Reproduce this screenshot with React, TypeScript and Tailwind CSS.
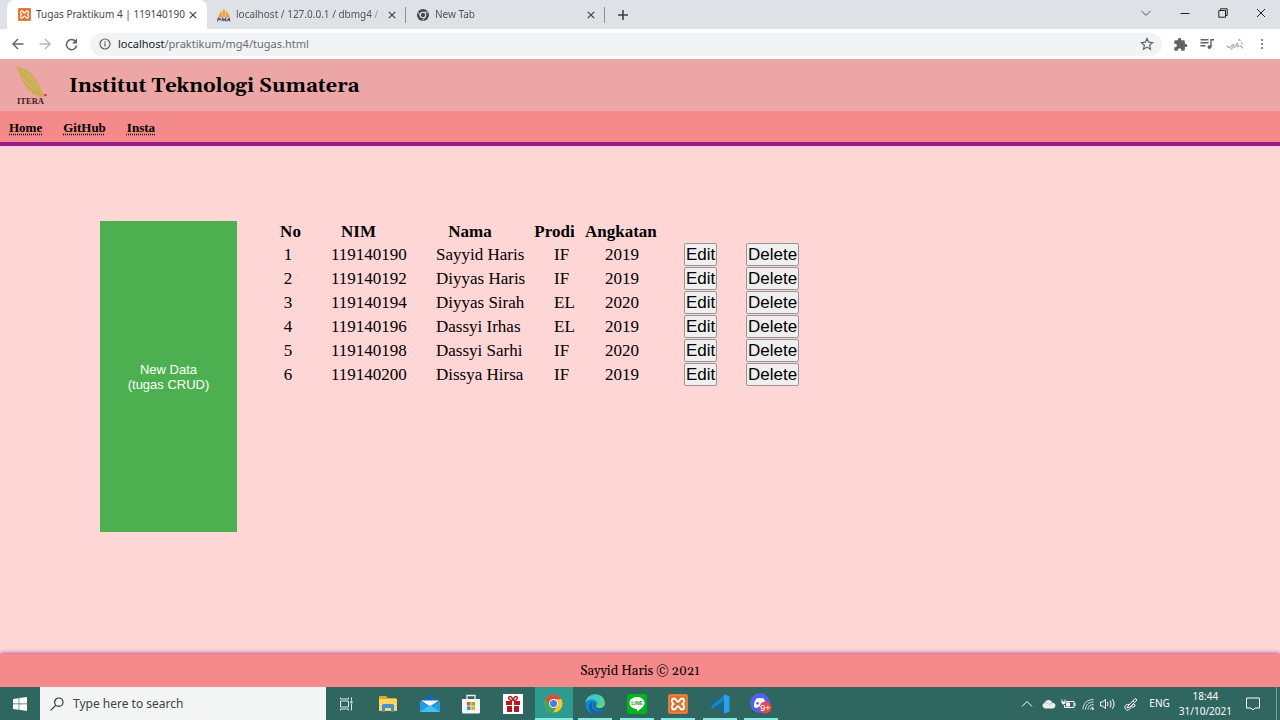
import type { ReactNode } from "react";

const rows = [
  { no: 1, nim: "119140190", nama: "Sayyid Haris", prodi: "IF", angkatan: 2019 },
  { no: 2, nim: "119140192", nama: "Diyyas Haris", prodi: "IF", angkatan: 2019 },
  { no: 3, nim: "119140194", nama: "Diyyas Sirah", prodi: "EL", angkatan: 2020 },
  { no: 4, nim: "119140196", nama: "Dassyi Irhas", prodi: "EL", angkatan: 2019 },
  { no: 5, nim: "119140198", nama: "Dassyi Sarhi", prodi: "IF", angkatan: 2020 },
  { no: 6, nim: "119140200", nama: "Dissya Hirsa", prodi: "IF", angkatan: 2019 },
];

function XamppIcon({ className }: { className: string }) {
  return (
    <svg viewBox="0 0 20 20" className={className} aria-hidden="true">
      <rect width="20" height="20" rx="2" fill="#e0702a" />
      <rect x="1.200" y="1.200" width="17.600" height="17.600" rx="1.500" fill="none" stroke="#f0a06a" strokeWidth=".6" />
      <path
        d="M6 4.500C4.300 4.500 3.900 5.800 3.900 7C3.900 8.600 4.500 9.500 5.800 10C4.500 10.500 3.900 11.400 3.900 13C3.900 14.200 4.300 15.500 6 15.500C8.300 15.500 8.300 12.300 10 12.300C11.700 12.300 11.700 15.500 14 15.500C15.700 15.500 16.100 14.200 16.100 13C16.100 11.400 15.500 10.500 14.200 10C15.500 9.500 16.100 8.600 16.100 7C16.100 5.800 15.700 4.500 14 4.500C11.700 4.500 11.700 7.700 10 7.700C8.300 7.700 8.300 4.500 6 4.500z"
        fill="none"
        stroke="#fff"
        strokeWidth="1.900"
        strokeLinejoin="round"
      />
    </svg>
  );
}

function PmaIcon() {
  return (
    <svg viewBox="0 0 16 14" className="h-3.5 w-4" aria-hidden="true">
      <path d="M2 9.500C3 7 4 4.500 5.800 3L6 9zM6.500 9.200C6.400 5.500 6.500 2.500 8 .5c1 2.600 1.400 5.600 1.200 8.500zM9.800 9c.3-2.300.2-4.500-.4-6.600 2.500 1.600 3.900 4 4.300 7z" fill="#f2a02c" />
      <path d="M1.500 13.300l.7-3.100h1.600q1.200.6.2 1.600H2.300M5.800 13.300l.8-3.100 1.200 2.100 2-2.100-.5 3.100M10.500 13.300l2.600-3.100.8 3.100M11.600 12.300h2" fill="none" stroke="#4b4e72" strokeWidth="1.100" />
    </svg>
  );
}

function ChromeMonoIcon() {
  return (
    <svg viewBox="0 0 14 14" className="size-3" aria-hidden="true">
      <circle cx="7" cy="7" r="7" fill="#46494d" />
      <circle cx="7" cy="7" r="3.200" fill="#46494d" stroke="#dee1e6" strokeWidth="1.300" />
      <path d="M7 3.800h6M4.200 8.600L1.300 3.600M9.800 8.600l-3 5" stroke="#dee1e6" strokeWidth="1" />
    </svg>
  );
}

function CloseIcon({ className }: { className: string }) {
  return (
    <svg viewBox="0 0 10 10" className={className} fill="none" stroke="currentColor" aria-hidden="true">
      <path d="M1 1l8 8M9 1L1 9" />
    </svg>
  );
}

function Tab({ icon, title, active }: { icon: ReactNode; title: string; active?: boolean }) {
  return (
    <div
      className={
        active
          ? "flex h-[29px] w-[200px] items-center rounded-t-lg bg-white pr-[10px] pl-[9px]"
          : "flex h-[29px] w-[199px] items-center pl-[9px]"
      }
    >
      <span className="flex w-4 shrink-0 justify-center">{icon}</span>
      <span
        className={
          active
            ? "ml-1 min-w-0 flex-1 text-[10px] whitespace-nowrap text-[#45484c]"
            : "ml-1 min-w-0 flex-1 mask-r-from-90% text-[10px] whitespace-nowrap text-[#505458]"
        }
      >
        {title}
      </span>
      <button aria-label={`Close ${title}`} className="ml-1 shrink-0 text-[#3c4043]">
        <CloseIcon className="size-2 stroke-[1.500]" />
      </button>
      {!active && <span className="ml-[9px] h-4 w-px shrink-0 bg-[#8d9095]" />}
    </div>
  );
}

function BrowserChrome() {
  return (
    <div className="font-['Noto_Sans',sans-serif]">
      <div className="flex h-[29px] items-center bg-[#dee1e6] pl-[7px]">
        <Tab active icon={<XamppIcon className="size-[13px]" />} title="Tugas Praktikum 4 | 119140190" />
        <Tab icon={<PmaIcon />} title="localhost / 127.0.0.1 / dbmg4 / m" />
        <Tab icon={<ChromeMonoIcon />} title="New Tab" />
        <button aria-label="New tab" className="ml-3 text-[#3c4043]">
          <svg viewBox="0 0 12 12" className="size-3" fill="none" stroke="currentColor" strokeWidth="1.600" aria-hidden="true">
            <path d="M6 1v10M1 6h10" />
          </svg>
        </button>
        <div className="ml-auto flex items-center pr-[14px] pb-[4px] text-[#222]">
          <button aria-label="Search tabs" className="mr-7">
            <svg viewBox="0 0 12 12" className="size-3" fill="none" stroke="#555" aria-hidden="true">
              <path d="M1.500 4L6 8.300 10.500 4" />
            </svg>
          </button>
          <button aria-label="Minimize" className="mr-7">
            <svg viewBox="0 0 10 10" className="size-2.5" stroke="currentColor" aria-hidden="true">
              <path d="M.5 5.500h9" />
            </svg>
          </button>
          <button aria-label="Restore" className="mr-7">
            <svg viewBox="0 0 10 10" className="size-2.5" fill="none" stroke="currentColor" aria-hidden="true">
              <path d="M.8 2.500h6.700v6.700H.8zM2.500 2.500V.8h6.700v6.700H7.500" />
            </svg>
          </button>
          <button aria-label="Close window">
            <CloseIcon className="size-2.5 stroke-1" />
          </button>
        </div>
      </div>
      <div className="flex h-[30px] items-center bg-white pr-3 pl-3">
        <button aria-label="Back">
          <svg viewBox="0 0 12 12" className="size-3" fill="none" stroke="#5f6368" strokeWidth="1.400" aria-hidden="true">
            <path d="M11.500 6H1.200M6 1L1 6l5 5" />
          </svg>
        </button>
        <button aria-label="Forward" className="ml-[15px]">
          <svg viewBox="0 0 12 12" className="size-3" fill="none" stroke="#b4b7ba" strokeWidth="1.400" aria-hidden="true">
            <path d="M.5 6h10.300M6 1l5 5-5 5" />
          </svg>
        </button>
        <button aria-label="Reload" className="ml-[14px]">
          <svg viewBox="0 0 13 13" className="size-[13px]" aria-hidden="true">
            <path d="M10.500 3.300A5.100 5.100 0 1 0 11.600 7.500" fill="none" stroke="#5f6368" strokeWidth="1.500" />
            <path d="M12 .5v5H7z" fill="#5f6368" />
          </svg>
        </button>
        <div className="ml-3 flex h-[23px] flex-1 items-center rounded-full bg-[#f1f3f4] pr-2 pl-[9px]">
          <svg viewBox="0 0 12 12" className="size-3 shrink-0" fill="none" stroke="#5f6368" aria-hidden="true">
            <circle cx="6" cy="6" r="5" strokeWidth="1.200" />
            <path d="M6 5.300v3.200M6 3.300v1.200" strokeWidth="1.300" />
          </svg>
          <span className="ml-[7px] flex-1 text-[11px] text-[#686c70]">
            <span className="text-[#202124]">localhost</span>/praktikum/mg4/tugas.html
          </span>
          <button aria-label="Bookmark">
            <svg viewBox="0 0 14 14" className="size-3.5" fill="none" stroke="#5f6368" strokeWidth="1.200" aria-hidden="true">
              <path d="M7 1.500l1.600 3.700 4 .4-3 2.700.9 3.900L7 10.100l-3.500 2.100.9-3.900-3-2.700 4-.4z" />
            </svg>
          </button>
        </div>
        <div className="ml-[11px] flex items-center gap-3">
          <button aria-label="Extensions">
            <svg viewBox="0 0 24 24" className="size-[15px]" fill="#5f6368" aria-hidden="true">
              <path d="M20.500 11H19V7a2 2 0 0 0-2-2h-4V3.500a2.500 2.500 0 0 0-5 0V5H4a2 2 0 0 0-2 2v3.800h1.500a2.700 2.700 0 0 1 0 5.400H2V20a2 2 0 0 0 2 2h3.800v-1.500a2.700 2.700 0 0 1 5.400 0V22H17a2 2 0 0 0 2-2v-4h1.500a2.500 2.500 0 0 0 0-5z" />
            </svg>
          </button>
          <button aria-label="Media controls">
            <svg viewBox="0 0 14 12" className="h-3 w-3.5" fill="none" stroke="#5f6368" strokeWidth="1.400" aria-hidden="true">
              <path d="M.5 1.700h8M.5 4.700h8M.5 7.700h5M11 9V1.700h3" />
              <circle cx="9.500" cy="9" r="1.500" fill="#5f6368" strokeWidth="1" />
            </svg>
          </button>
          <button aria-label="Profile">
            <svg viewBox="0 0 18 14" className="h-3.5 w-[18px]" fill="none" stroke="#a9abad" aria-hidden="true">
              <path d="M1 8.500q1 3 3.500 1.500T6 7M4 12q2 .8 3-2l1-3M8.500 11q1-4 3-5 1 1 .5 4.500M9.500 9h4M12 3.500l1.500-1 1 1.500M15 5.500l1.500 1.500M14 8.500q2 1.500 3 3" strokeWidth="1.100" />
            </svg>
          </button>
          <button aria-label="Menu" className="flex w-3 flex-col items-center gap-0.5">
            <span className="size-0.5 rounded-full bg-[#5f6368]" />
            <span className="size-0.5 rounded-full bg-[#5f6368]" />
            <span className="size-0.5 rounded-full bg-[#5f6368]" />
          </button>
        </div>
      </div>
    </div>
  );
}

function IteraLogo() {
  return (
    <svg viewBox="0 0 34 40" className="h-10 w-[34px]" role="img" aria-label="ITERA">
      <path d="M1.500 .5l4 2 1.500-.5 2 2 2.500.2 2 2 3 .8 1 2.500 2.500 1.500.5 2.500 2.500 1.500 1 3 2 1.500.5 3 1.500 2 .5 3 2 2.500-.5 2-2.500-.5-2.500.5-3-2-3-.5-2-3-2.500-1-1-2.500-2-1.500-1-3-2-2-.5-3-2-2-.5-3.500z" fill="#c8ad55" />
      <path d="M4 3l25 26M9 6l19 19M6 9l16 17M14 8l12 14M9 14l11 11" stroke="#dfc478" strokeWidth=".8" strokeDasharray="1 1" />
      <circle cx="31.500" cy="30" r="1.200" fill="#d22c35" />
      <text x="16.500" y="39" textAnchor="middle" fontSize="8.500" fontWeight="700" fill="#3b2222" fontFamily="'Liberation Serif', serif">
        ITERA
      </text>
    </svg>
  );
}

const headerCell = "p-0 pl-[10px] text-center font-bold";
const cell = "p-0 pl-[30px]";
const rowButton =
  "block h-[23px] rounded-[2px] border border-[#9a9494] bg-[#efefef] px-px font-['Liberation_Sans',Arial,sans-serif] text-[17px] leading-[21px]";

function WebPage() {
  return (
    <div className="flex flex-1 flex-col bg-[#fed6d6] font-['Liberation_Serif','Times_New_Roman',serif] text-black">
      <header className="flex h-[52px] items-center bg-[#eca6a6] pl-[14px]">
        <IteraLogo />
        <h1 className="ml-[21px] pt-0.5 font-['Georgia','Gelasio','DejaVu_Serif',serif] text-xl font-bold">
          Institut Teknologi Sumatera
        </h1>
      </header>
      <nav className="flex h-[35px] items-center gap-[21px] border-b-4 border-[#9b1889] bg-[#f58a8a] pt-0.5 pl-[9px] text-[13px] font-bold">
        <a href="#home" className="underline decoration-dotted underline-offset-2">Home</a>
        <a href="#github" className="underline decoration-dotted underline-offset-2">GitHub</a>
        <a href="#insta" className="underline decoration-dotted underline-offset-2">Insta</a>
      </nav>
      <main className="flex flex-1 items-start px-[100px] pt-[75px]">
        <button className="h-[311px] w-[137px] shrink-0 bg-[#4caf50] font-['Liberation_Sans',Arial,sans-serif] text-[13px] leading-[15px] text-white">
          New Data
          <br />
          (tugas CRUD)
        </button>
        <table className="ml-[33px] w-[530px] table-fixed border-collapse text-left text-[17px] leading-[21px]">
          <colgroup>
            <col className="w-[31px]" />
            <col className="w-[105px]" />
            <col className="w-[118px]" />
            <col className="w-[51px]" />
            <col className="w-[79px]" />
            <col className="w-[62px]" />
            <col className="w-[84px]" />
          </colgroup>
          <thead>
            <tr>
              <th className={headerCell}>No</th>
              <th className={headerCell}>NIM</th>
              <th className={headerCell}>Nama</th>
              <th className={headerCell}>Prodi</th>
              <th className={headerCell}>Angkatan</th>
            </tr>
          </thead>
          <tbody>
            {rows.map((r) => (
              <tr key={r.nim} className="h-6">
                <td className="p-0 pl-[5px] text-center">{r.no}</td>
                <td className={cell}>{r.nim}</td>
                <td className={`${cell} whitespace-nowrap`}>{r.nama}</td>
                <td className={cell}>{r.prodi}</td>
                <td className={cell}>{r.angkatan}</td>
                <td className={cell}>
                  <button className={rowButton}>Edit</button>
                </td>
                <td className={cell}>
                  <button className={rowButton}>Delete</button>
                </td>
              </tr>
            ))}
          </tbody>
        </table>
      </main>
      <footer className="flex h-[33px] items-center justify-center bg-[#f58a8a] pt-0.5 font-['Georgia','Gelasio','DejaVu_Serif',serif] text-[13px] shadow-[0_0_5px_#9b1889]">
        Sayyid Haris © 2021
      </footer>
    </div>
  );
}

function TaskItem({ label, open, active, children }: { label: string; open?: boolean; active?: boolean; children: ReactNode }) {
  return (
    <button
      aria-label={label}
      className={
        active
          ? "mx-auto flex h-full w-[38px] items-center justify-center border-b-2 border-[#8be9e4] bg-[#2f9a8e] pt-0.5"
          : open
            ? "mx-auto flex h-full w-[34px] items-center justify-center border-b-2 border-[#8be9e4] pt-0.5"
            : "mx-auto flex h-full w-[34px] items-center justify-center"
      }
    >
      {children}
    </button>
  );
}

function Taskbar() {
  return (
    <div className="relative flex h-[33px] items-center bg-[#306660] font-['Noto_Sans',sans-serif] text-white">
      <button aria-label="Start" className="flex h-full w-10 items-center justify-center">
        <svg viewBox="0 0 14 14" className="size-3.5" fill="#fff" aria-hidden="true">
          <path d="M0 2l5.700-.8v5.400H0zM6.300 1.100L14 0v6.600H6.300zM0 7.200h5.700v5.500L0 12zM6.300 7.200H14V14l-7.700-1.200z" />
        </svg>
      </button>
      <label className="flex h-full w-[286px] items-center bg-[#f2f5f4] pl-[10px]">
        <svg viewBox="0 0 14 14" className="size-3.5 shrink-0" fill="none" stroke="#333" strokeWidth="1.200" aria-hidden="true">
          <circle cx="8.800" cy="5.200" r="4.200" />
          <path d="M5.700 8.300L.7 13.300" />
        </svg>
        <input
          aria-label="Type here to search"
          placeholder="Type here to search"
          className="ml-[9px] w-full bg-transparent text-xs outline-none placeholder:text-[#3d4242]"
        />
      </label>
      <div className="grid h-full w-[456px] grid-cols-11">
        <TaskItem label="Task view">
          <svg viewBox="0 0 15 14" className="h-3.5 w-[15px]" fill="none" stroke="#dce8e6" aria-hidden="true">
            <path d="M1.500 4h8v6h-8zM1.500.5v1.500h8V.5M1.500 13.500V12h8v1.500M12.500.5v3M12.500 7v6.500" />
            <path d="M12.500 4v2.500" strokeWidth="2" />
          </svg>
        </TaskItem>
        <TaskItem label="File Explorer">
          <svg viewBox="0 0 20 18" className="h-[18px] w-5" aria-hidden="true">
            <path d="M1 1h7l2 2h8v4H1z" fill="#e5a528" />
            <path d="M1 4h18v12H1z" fill="#fbd461" />
            <path d="M4 17v-6.500q0-1.500 1.500-1.500h9q1.500 0 1.500 1.500V17h-3v-4H7v4z" fill="#4690ce" />
          </svg>
        </TaskItem>
        <TaskItem label="Mail">
          <svg viewBox="0 0 20 18" className="h-[18px] w-5" aria-hidden="true">
            <path d="M0 6l10-6 10 6v11H0z" fill="#1666b3" />
            <path d="M1 5.500h18l-9 6z" fill="#f6fbff" />
            <path d="M0 6l10 6L20 6v11H0z" fill="#249be5" />
            <path d="M0 17l10-7 10 7z" fill="#45c1f1" />
          </svg>
        </TaskItem>
        <TaskItem label="Microsoft Store">
          <svg viewBox="0 0 20 20" className="size-5" aria-hidden="true">
            <path d="M6 6V1.500h8V6" fill="none" stroke="#eee" strokeWidth="1.300" />
            <path d="M1 5h18v13q0 1.500-1.500 1.500h-15Q1 19.500 1 18z" fill="#f4f4f4" />
            <path d="M6 8h3.600v3.600H6z" fill="#e95524" />
            <path d="M10.400 8H14v3.600h-3.600z" fill="#79b72c" />
            <path d="M6 12.400h3.600V16H6z" fill="#269ddd" />
            <path d="M10.400 12.400H14V16h-3.600z" fill="#edae1b" />
          </svg>
        </TaskItem>
        <TaskItem label="Rewards">
          <svg viewBox="0 0 20 20" className="size-5" aria-hidden="true">
            <path d="M0 0h20v20H0z" fill="#fff" />
            <path d="M3 7h6v4H3zM11 7h6v4h-6zM4 12h5v6H4zM11 12h5v6h-5z" fill="#b51922" />
            <path d="M9.500 6.500C5 6.500 5 2.500 7 2.500s2.500 2 3 4c.5-2 1-4 3-4s2 4-2.500 4" fill="none" stroke="#b51922" strokeWidth="1.400" />
          </svg>
        </TaskItem>
        <TaskItem label="Google Chrome" active>
          <svg viewBox="0 0 20 20" className="size-[19px]" aria-hidden="true">
            <circle cx="10" cy="10" r="9.500" fill="#f7c52d" />
            <path d="M10 10L1.800 5.200A9.500 9.500 0 0 1 18.300 5.500H10z" fill="#df4938" />
            <path d="M1.800 5.200A9.500 9.500 0 0 0 9.500 19.500L13.900 12.300 10 10z" fill="#43a652" />
            <path d="M1.800 5.200L6 12.200 10 8V5.500L8 3z" fill="#df4938" />
            <path d="M1.800 5.200L6.100 12.300 9 14l.5 5.500A9.500 9.500 0 0 1 1.800 5.200z" fill="#43a652" />
            <circle cx="10" cy="10" r="4.700" fill="#fff" />
            <circle cx="10" cy="10" r="3.700" fill="#437de6" />
          </svg>
        </TaskItem>
        <TaskItem label="Microsoft Edge" open>
          <svg viewBox="0 0 20 20" className="size-5" aria-hidden="true">
            <circle cx="10" cy="10" r="9.800" fill="#1687cf" />
            <path d="M.5 8.500C1.200 3.800 5 .2 10 .2c5.800 0 9.800 4 9.800 8.800 0 3.500-2.500 5-5 5-2 0-3.500-.8-3.500-1.700 0-.7 1-1.200 1-2.800C12.300 7.300 9.500 5.500 6.500 5.500c-2.500 0-4.700 1-6 3z" fill="#3fcbc4" />
            <path d="M14 1c4 1.800 5.800 5 5.800 8 0 3.500-2.500 5-5 5-2 0-3.500-.8-3.500-1.700 0-.7 1-1.200 1-2.800 3 0 4-5 1.700-8.500z" fill="#5bd486" />
            <path d="M8 7.500C5.500 10 6.500 17 13.500 17c2 0 3.500-.6 5-1.800C16.500 18.200 13.600 19.800 10.500 19.800 6 19.500 3.500 15.500 4 12c.3-2.200 2-4 4-4.500z" fill="#1461ac" />
            <path d="M9.500 8.500c-1.300 3 .2 6.500 4.500 7 2.500.2 4.200-1 5.300-2.200l-.8 1.900" fill="none" stroke="#2c5f68" strokeWidth="1.500" />
          </svg>
        </TaskItem>
        <TaskItem label="LINE" open>
          <svg viewBox="0 0 20 20" className="size-5" aria-hidden="true">
            <rect width="20" height="20" rx="2" fill="#00b51a" />
            <path d="M10 3c4.200 0 7.500 2.600 7.500 5.900 0 2.800-3 5.500-7.500 8.600 0-1 .4-2.400-.6-2.600C5.500 14.500 2.500 12.100 2.500 8.900 2.500 5.600 5.800 3 10 3z" fill="#fff" />
            <text x="10" y="10.800" textAnchor="middle" fontSize="5" fontWeight="700" fill="#139b27" fontFamily="'Liberation Sans', sans-serif">
              LINE
            </text>
          </svg>
        </TaskItem>
        <TaskItem label="XAMPP" open>
          <XamppIcon className="size-5" />
        </TaskItem>
        <TaskItem label="Visual Studio Code" open>
          <svg viewBox="0 0 20 20" className="size-5" aria-hidden="true">
            <path d="M.5 7l2-2L15 14.500v5z" fill="#0b67ae" />
            <path d="M.5 13l2 2L15 5.500V.5z" fill="#1685d0" />
            <path d="M14 .3l5.500 2.200v15L14 19.700z" fill="#27a2ef" />
          </svg>
        </TaskItem>
        <TaskItem label="Discord, 9+ notifications" open>
          <svg viewBox="0 0 22 21" className="h-[21px] w-[22px]" aria-hidden="true">
            <circle cx="10" cy="10" r="10" fill="#5562e8" />
            <path d="M6.300 5.500Q10 4.300 13.700 5.500q2.500 3.500 2.500 8-1.700 1.500-3.500 1.600l-.8-1.300H8.100l-.8 1.300q-1.800-.1-3.500-1.600 0-4.500 2.500-8z" fill="#fff" />
            <ellipse cx="7.600" cy="10.200" rx="1.200" ry="1.500" fill="#5562e8" />
            <circle cx="15.500" cy="14.500" r="6" fill="#e04a50" />
            <text x="15.500" y="17.500" textAnchor="middle" fontSize="9" fill="#fff" fontFamily="'Liberation Sans', sans-serif">
              9+
            </text>
          </svg>
        </TaskItem>
      </div>
      <div className="ml-auto flex h-full items-center">
        <div className="flex items-center gap-[5px]">
          <svg viewBox="0 0 14 12" className="mr-0.5 h-3 w-3.5" fill="none" stroke="#fff" aria-hidden="true">
            <path d="M2 8.500L7 3.500l5 5" />
          </svg>
          <svg viewBox="0 0 15 12" className="h-3 w-[15px]" aria-hidden="true">
            <path d="M4 10.500a3 3 0 0 1-.5-5.800Q5 1.500 8 2q2.500.3 3.200 2.800 3 0 3.300 2.800 0 2.400-2.500 2.900z" fill="#e8efee" />
            <path d="M3.500 5q2.500-.5 4.300 1.500l3.400-1.500" fill="none" stroke="#9fb8b5" strokeWidth=".7" />
          </svg>
          <svg viewBox="0 0 15 12" className="h-3 w-[15px]" fill="none" stroke="#fff" aria-hidden="true">
            <path d="M5 3.500h8v6H3.500V7M14 5v3M1 1.500v2M4 1.500v2" />
            <path d="M5 4.500h4v4H5zM.5 3.500h4v1.500L3 6.500H2L.5 5z" fill="#fff" stroke="none" />
          </svg>
          <svg viewBox="0 0 14 14" className="h-3.5 w-3.5" fill="none" stroke="#d4e1df" aria-hidden="true">
            <path d="M2 12.500C2 6.500 6 2.500 12.500 2.500M4.500 12.500c0-4.500 3-7.500 8-7.500M7 12.500c0-3 2-5 5.500-5M9.500 12.500q0-2.500 3-2.500" />
            <circle cx="11.800" cy="12" r="1" fill="#fff" stroke="none" />
          </svg>
          <svg viewBox="0 0 15 12" className="h-3 w-[15px]" fill="none" stroke="#fff" aria-hidden="true">
            <path d="M.5 4h2L5.500 1.500v9L2.500 8h-2zM7.500 4q1.300 2 0 4M10 2.500q2.500 3.500 0 7M12.300 1q3.500 5 0 10" />
          </svg>
        </div>
        <svg viewBox="0 0 14 14" className="ml-[9px] size-3.5" fill="none" stroke="#fff" aria-hidden="true">
          <path d="M4 9l7-7.500 2 1.500-7 7-3 .8zM9 4l2 2M5 7.500C1 6.500-.5 11 2.500 13c2 .8 4-1.500 5-4 1-2 3-2.500 3.500-1s-2 3-3.500 1.500" />
        </svg>
        <span className="ml-[11px] text-[10px]">ENG</span>
        <div className="ml-[9px] text-center text-[10px] leading-[15px]">
          <div>18:44</div>
          <div>31/10/2021</div>
        </div>
        <svg viewBox="0 0 14 14" className="ml-[14px] size-3.5" fill="none" stroke="#fff" aria-hidden="true">
          <path d="M.5 1h13v10H9l-2 2-2-2H.5z" />
        </svg>
        <span className="mr-[3px] ml-[16px] h-full w-px bg-[#7d9f9b]" />
      </div>
    </div>
  );
}

export default function App() {
  return (
    <div className="flex min-h-screen flex-col">
      <BrowserChrome />
      <WebPage />
      <Taskbar />
    </div>
  );
}
